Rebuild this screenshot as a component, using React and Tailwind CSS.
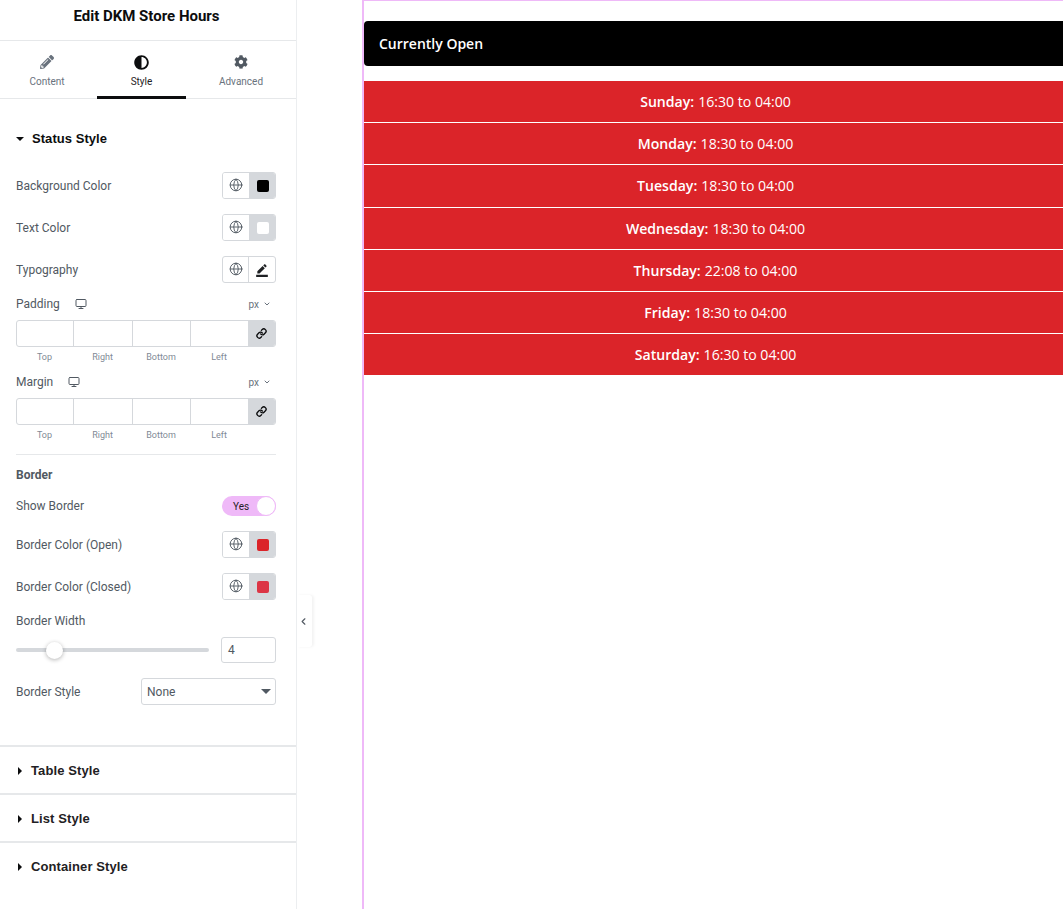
import { ChevronDown, ChevronLeft, Globe, Link, Monitor } from "lucide-react";
import { FaAdjust, FaCog, FaPencilAlt } from "react-icons/fa";
import { MdBorderColor } from "react-icons/md";

const hours = [
  ["Sunday:", "16:30 to 04:00"],
  ["Monday:", "18:30 to 04:00"],
  ["Tuesday:", "18:30 to 04:00"],
  ["Wednesday:", "18:30 to 04:00"],
  ["Thursday:", "22:08 to 04:00"],
  ["Friday:", "18:30 to 04:00"],
  ["Saturday:", "16:30 to 04:00"],
];

const Caret = ({ dir }) => (
  <svg width="8" height="8" viewBox="0 0 8 8" className="shrink-0 text-[#0c0d0e]" fill="currentColor">
    {dir === "down" ? <path d="M0 2h8L4 6z" /> : <path d="M2 0l4 4-4 4z" />}
  </svg>
);

const ColorRow = ({ label, color, className }) => (
  <div className={`flex h-[27px] items-center justify-between ${className}`}>
    <span className="text-xs text-[#515962]">{label}</span>
    <div className="flex h-[27px] w-[54px] overflow-hidden rounded-[3px] border border-[#d5d8dc]">
      <div className="flex w-[26px] items-center justify-center bg-white">
        <Globe size={14} strokeWidth={1.6} className="-mt-px text-[#515962]" />
      </div>
      <div className="flex flex-1 items-center justify-center bg-[#d5d8dc] pl-px">
        <span className={`h-3 w-3 rounded-[2px] ${color}`} />
      </div>
    </div>
  </div>
);

const SpacingControl = ({ label }) => (
  <div>
    <div className="flex h-[16px] items-center justify-between">
      <div className="flex items-center gap-[15px]">
        <span className="text-xs text-[#515962]">{label}</span>
        <Monitor size={12} strokeWidth={2} className="text-[#515962]" />
      </div>
      <div className="flex items-center gap-1 pr-[5px] text-[10px] text-[#69727d]">
        px <ChevronDown size={8} strokeWidth={3} />
      </div>
    </div>
    <div className="mt-2 flex h-[27px] overflow-hidden rounded-[3px] border border-[#d5d8dc]">
      <div className="w-[57px] border-r border-[#d5d8dc]" />
      <div className="w-[59px] border-r border-[#d5d8dc]" />
      <div className="w-[58px] border-r border-[#d5d8dc]" />
      <div className="w-[57px]" />
      <div className="flex flex-1 items-center justify-center bg-[#d5d8dc]">
        <Link size={11} strokeWidth={3} className="text-[#0c0d0e]" />
      </div>
    </div>
    <div className="mt-[5px] flex h-3 items-center text-[9px] text-[#818a96]">
      <span className="w-[57px] text-center">Top</span>
      <span className="w-[59px] text-center">Right</span>
      <span className="w-[58px] text-center">Bottom</span>
      <span className="w-[58px] text-center">Left</span>
    </div>
  </div>
);

const Section = ({ title }) => (
  <div className="flex h-[48px] items-center gap-[7px] border-t-2 border-[#e6e8ea] pt-px pl-4 font-['Liberation_Sans',sans-serif] text-[13px] font-bold tracking-[0.1px] text-[#1f2124]">
    <Caret dir="right" />
    {title}
  </div>
);

export default function App() {
  return (
    <div className="relative flex h-[909px] overflow-hidden bg-white font-['Roboto',sans-serif]">
      <aside className="flex w-[297px] shrink-0 flex-col border-r border-[#eceef0]">
        <div className="flex h-[41px] items-center justify-center border-b border-[#e6e8ea] pr-[3px] pb-[7px] text-[15px] font-bold text-[#0c0d0e]">
          Edit DKM Store Hours
        </div>
        <div className="flex h-[58px] border-b border-[#e6e8ea] text-[10px] text-[#69727d]">
          <div className="flex w-[97px] flex-col items-center pt-[14px] pr-[3px]">
            <FaPencilAlt size={14} className="text-[#69727d]" />
            <span className="mt-[5px]">Content</span>
          </div>
          <div className="-mb-px flex w-[89px] flex-col items-center border-b-[3px] border-[#0c0d0e] pt-[14px] text-[#1f2124]">
            <FaAdjust size={15} className="text-[#0c0d0e]" />
            <span className="mt-[4px]">Style</span>
          </div>
          <div className="flex flex-1 flex-col items-center pt-[14px]">
            <FaCog size={14} className="text-[#515962]" />
            <span className="mt-[5px]">Advanced</span>
          </div>
        </div>

        <div className="pr-5 pl-4">
          <div className="mt-[32px] flex h-[16px] items-center gap-2 font-['Liberation_Sans',sans-serif] text-[13px] font-bold tracking-[0.05px] text-[#0c0d0e]">
            <Caret dir="down" />
            Status Style
          </div>
          <ColorRow label="Background Color" color="bg-black" className="mt-[25px]" />
          <ColorRow label="Text Color" color="bg-white" className="mt-[15px]" />
          <div className="mt-[15px] flex h-[27px] items-center justify-between">
            <span className="text-xs text-[#515962]">Typography</span>
            <div className="flex h-[27px] w-[54px] rounded-[3px] border border-[#d5d8dc]">
              <div className="flex w-[26px] items-center justify-center border-r border-[#d5d8dc]">
                <Globe size={14} strokeWidth={1.6} className="-mt-px text-[#515962]" />
              </div>
              <div className="flex flex-1 items-center justify-center">
                <MdBorderColor size={14} className="text-[#1f2124]" />
              </div>
            </div>
          </div>
          <div className="mt-[13px]">
            <SpacingControl label="Padding" />
          </div>
          <div className="mt-[10px]">
            <SpacingControl label="Margin" />
          </div>
          <div className="mt-[12px] border-t border-[#e6e8ea] pt-[13px] text-xs leading-[14px] font-bold text-[#515962]">
            Border
          </div>
          <div className="mt-[14px] flex h-[20px] items-center justify-between">
            <span className="text-xs text-[#515962]">Show Border</span>
            <div className="flex h-[20px] w-[54px] items-center justify-between rounded-full bg-[#efb9f8] pl-[11px]">
              <span className="text-[10px] text-[#1f2124]">Yes</span>
              <span className="h-[20px] w-[20px] rounded-full border border-[#efb9f8] bg-white" />
            </div>
          </div>
          <ColorRow label="Border Color (Open)" color="bg-[#db2429]" className="mt-[15px]" />
          <ColorRow label="Border Color (Closed)" color="bg-[#dc3545]" className="mt-[15px]" />
          <div className="mt-[14px] text-xs leading-[14px] text-[#515962]">Border Width</div>
          <div className="mt-[9px] flex h-[26px] items-center gap-3">
            <div className="relative h-[4px] w-[193px] rounded-full bg-[#d5d8dc]">
              <span className="absolute top-[-6.5px] left-[30px] h-[17px] w-[17px] rounded-full bg-white shadow-[0_1px_4px_rgba(0,0,0,0.3)]" />
            </div>
            <div className="flex h-[26px] flex-1 items-center rounded-[3px] border border-[#d5d8dc] pl-[6px] text-xs text-[#515962]">
              4
            </div>
          </div>
          <div className="mt-[15px] flex h-[27px] items-center justify-between">
            <span className="text-xs text-[#515962]">Border Style</span>
            <div className="flex h-[27px] w-[135px] items-center justify-between rounded-[3px] border border-[#d5d8dc] pr-[4px] pl-[5px] text-xs text-[#515962]">
              None
              <svg width="10" height="5" viewBox="0 0 10 5" fill="currentColor">
                <path d="M0 0h10L5 5z" />
              </svg>
            </div>
          </div>
        </div>

        <div className="mt-[40px]">
          <Section title="Table Style" />
          <Section title="List Style" />
          <Section title="Container Style" />
        </div>
      </aside>

      <button className="absolute top-[595px] left-[297px] flex h-[52px] w-[15px] items-center justify-center rounded-r-[3px] bg-white pr-[3px] text-[#515962] shadow-[2px_0_3px_rgba(0,0,0,0.05)]">
        <ChevronLeft size={11} strokeWidth={2.5} />
      </button>

      <main className="min-w-0 flex-1 pl-[65px]">
        <div className="h-full border-t border-l-2 border-[#efb9f8] pt-5">
          <div className="flex h-[45px] items-center rounded-l-[4px] bg-black pl-[15px] font-['Open_Sans',sans-serif] text-sm font-semibold text-white">
            Currently Open
          </div>
          <ul className="mt-[15px] font-['Open_Sans',sans-serif] text-[14.1px] text-white">
            {hours.map(([day, time], i) => (
              <li
                key={day}
                className={`flex items-center justify-center bg-[#db2429] pl-1 ${i < 6 ? "h-[42.2px] border-b border-white" : "h-[41px]"}`}
              >
                <b className="mr-1 font-semibold">{day}</b>
                {time}
              </li>
            ))}
          </ul>
        </div>
      </main>
    </div>
  );
}
